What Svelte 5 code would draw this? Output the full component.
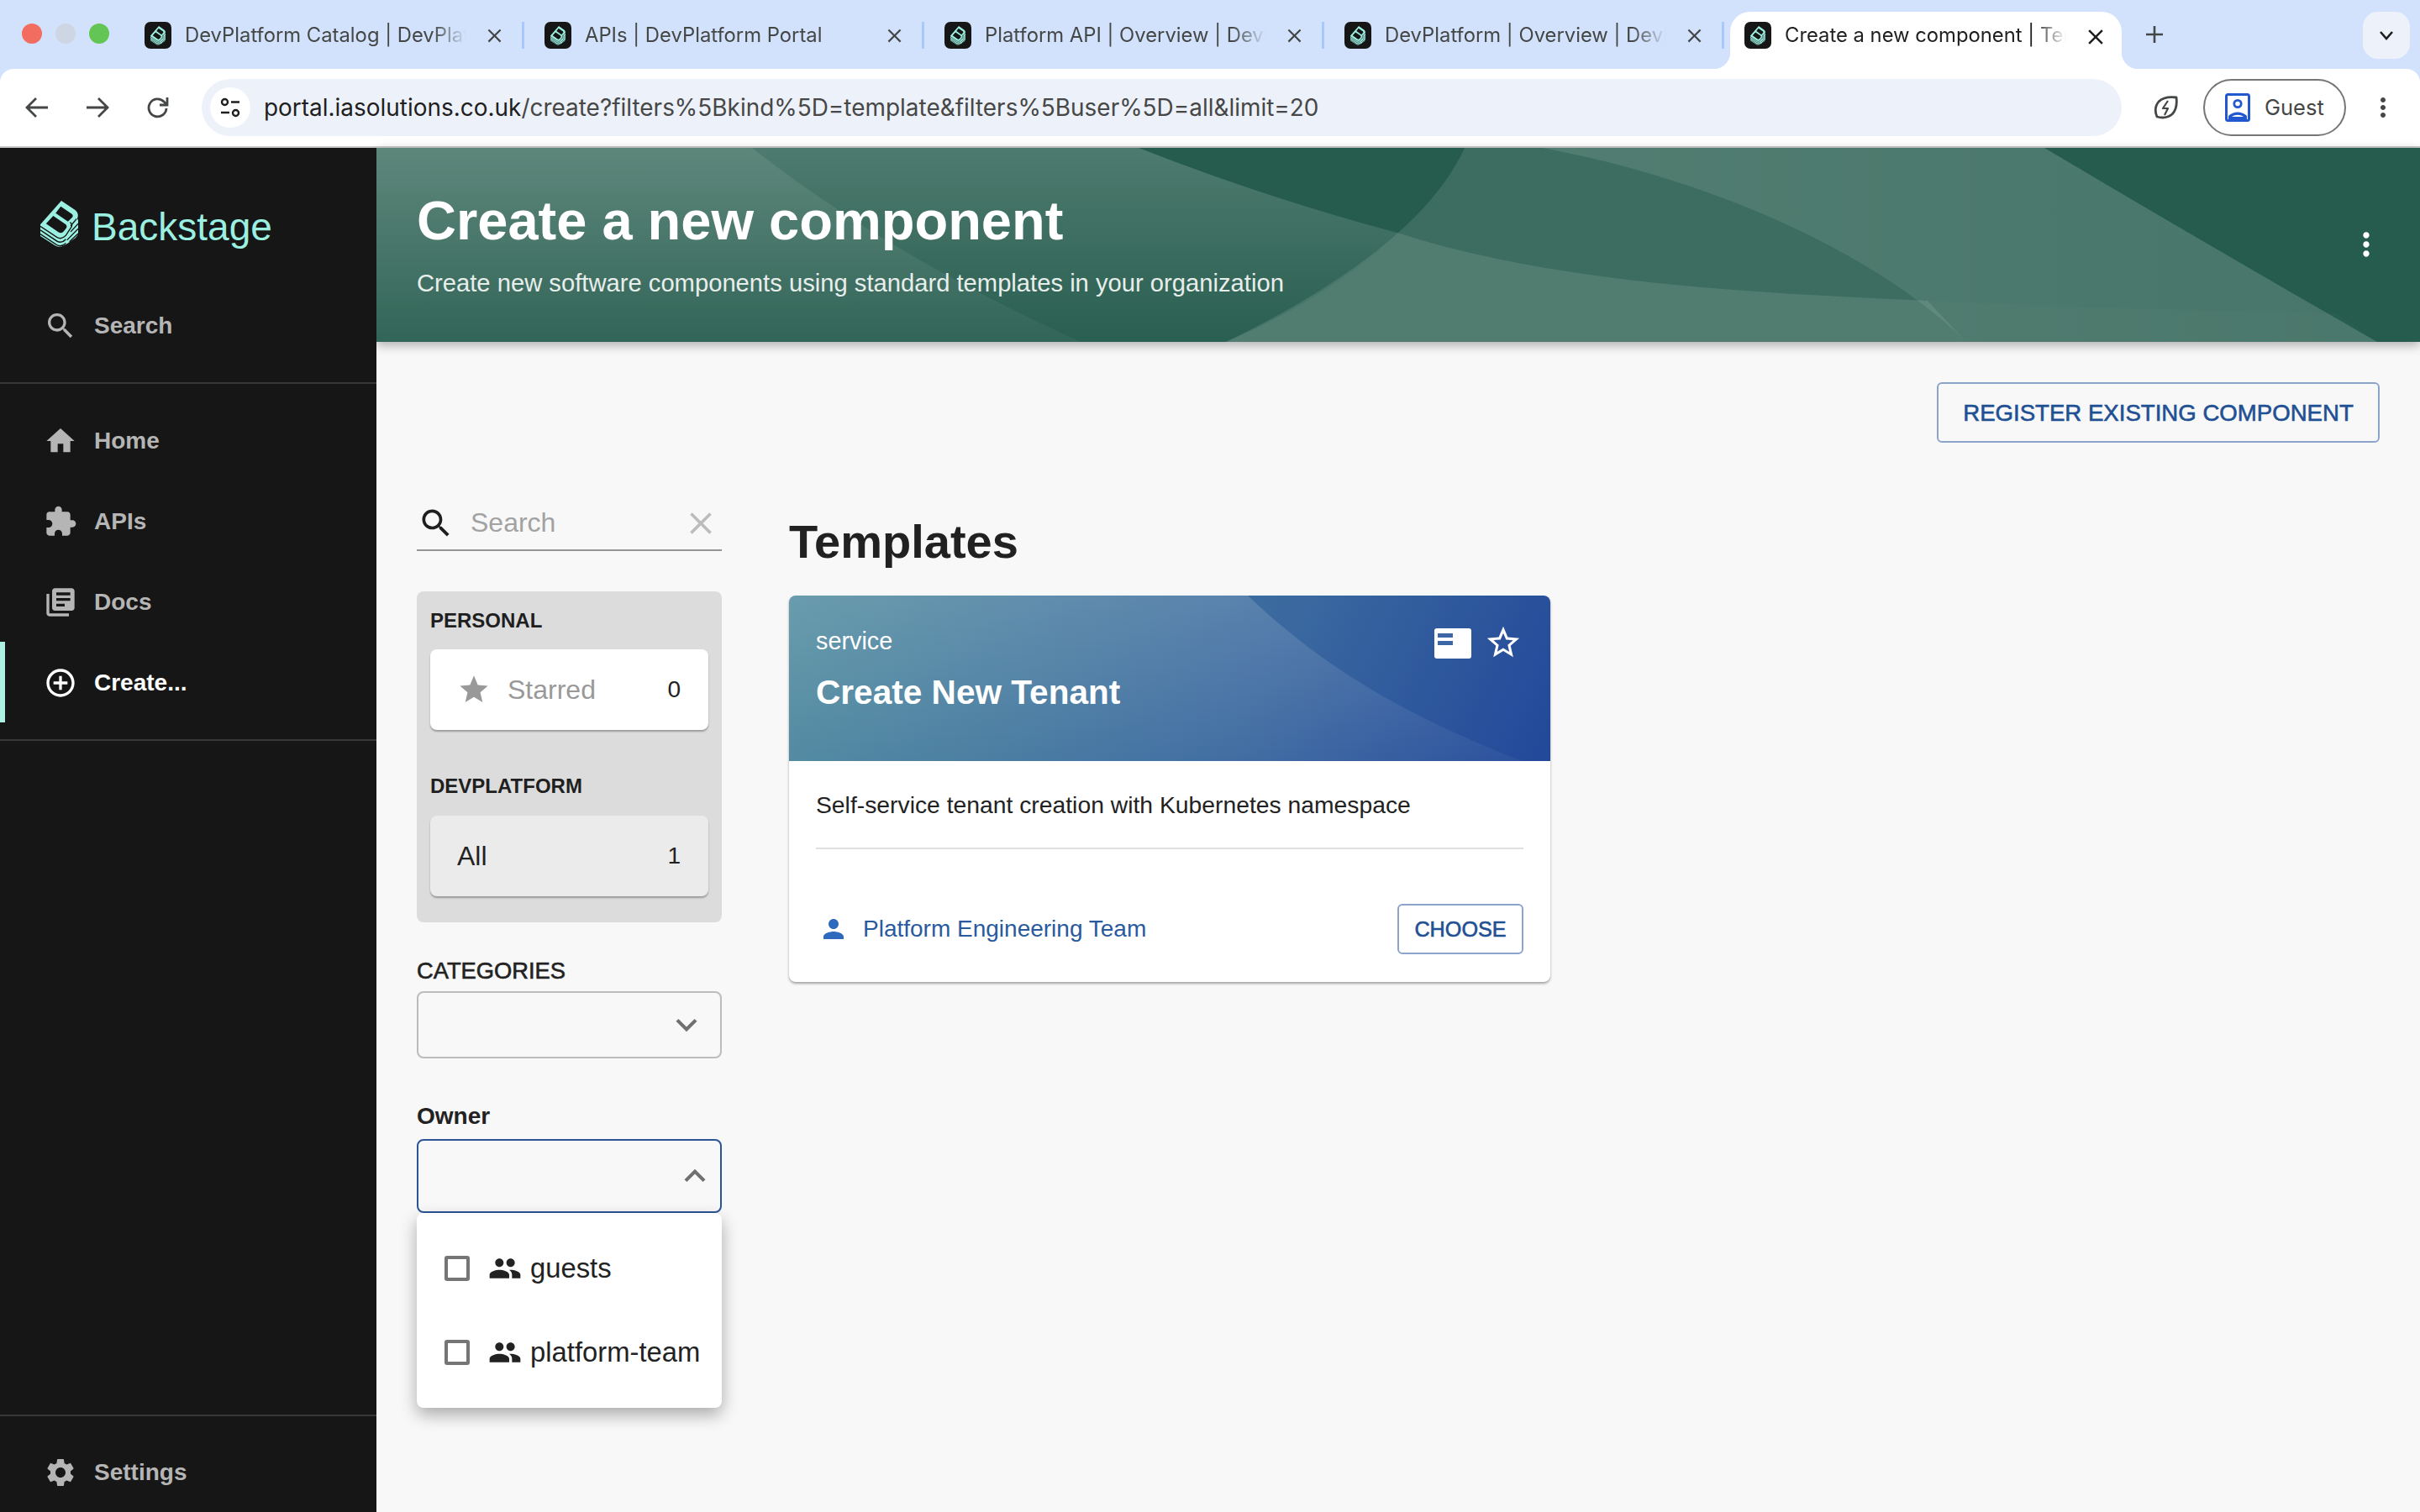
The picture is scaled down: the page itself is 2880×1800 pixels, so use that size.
<script>
  const icons = {
    search: 'M15.5 14h-.79l-.28-.27C15.41 12.59 16 11.11 16 9.5 16 5.91 13.09 3 9.5 3S3 5.91 3 9.5 5.91 16 9.5 16c1.61 0 3.09-.59 4.23-1.57l.27.28v.79l5 4.99L20.49 19l-4.99-5zm-6 0C7.01 14 5 11.99 5 9.5S7.01 5 9.5 5 14 7.01 14 9.5 11.99 14 9.5 14z',
    home: 'M10 20v-6h4v6h5v-8h3L12 3 2 12h3v8z',
    puzzle: 'M20.5 11H19V7c0-1.1-.9-2-2-2h-4V3.5C13 2.12 11.88 1 10.5 1S8 2.12 8 3.5V5H4c-1.1 0-1.99.9-1.99 2v3.8H3.5c1.49 0 2.7 1.21 2.7 2.7s-1.21 2.7-2.7 2.7H2V20c0 1.1.9 2 2 2h3.8v-1.5c0-1.49 1.21-2.7 2.7-2.7 1.49 0 2.7 1.21 2.7 2.7V22H17c1.1 0 2-.9 2-2v-4h1.5c1.38 0 2.5-1.12 2.5-2.5S21.88 11 20.5 11z',
    docs: 'M4 6H2v14c0 1.1.9 2 2 2h14v-2H4V6zm16-4H8c-1.1 0-2 .9-2 2v12c0 1.1.9 2 2 2h12c1.1 0 2-.9 2-2V4c0-1.1-.9-2-2-2zm-1 9H9V9h10v2zm-4 4H9v-2h6v2zm4-8H9V5h10v2z',
    add: 'M13 7h-2v4H7v2h4v4h2v-4h4v-2h-4V7zm-1-5C6.48 2 2 6.48 2 12s4.48 10 10 10 10-4.48 10-10S17.52 2 12 2zm0 18c-4.41 0-8-3.59-8-8s3.59-8 8-8 8 3.59 8 8-3.59 8-8 8z',
    settings: 'M19.14 12.94c.04-.3.06-.61.06-.94 0-.32-.02-.64-.07-.94l2.03-1.58c.18-.14.23-.41.12-.61l-1.92-3.32c-.12-.22-.37-.29-.59-.22l-2.39.96c-.5-.38-1.03-.7-1.62-.94l-.36-2.54c-.04-.24-.24-.41-.48-.41h-3.84c-.24 0-.43.17-.47.41l-.36 2.54c-.59.24-1.13.57-1.62.94l-2.39-.96c-.22-.08-.47 0-.59.22L2.74 8.87c-.12.21-.08.47.12.61l2.03 1.58c-.05.3-.09.63-.09.94s.02.64.07.94l-2.03 1.58c-.18.14-.23.41-.12.61l1.92 3.32c.12.22.37.29.59.22l2.39-.96c.5.38 1.03.7 1.62.94l.36 2.54c.05.24.24.41.48.41h3.84c.24 0 .44-.17.47-.41l.36-2.54c.59-.24 1.13-.56 1.62-.94l2.39.96c.22.08.47 0 .59-.22l1.92-3.32c.12-.22.07-.47-.12-.61l-2.01-1.58zM12 15.6c-1.98 0-3.6-1.62-3.6-3.6s1.62-3.6 3.6-3.6 3.6 1.62 3.6 3.6-1.62 3.6-3.6 3.6z',
    star: 'M12 17.27L18.18 21l-1.64-7.03L22 9.24l-7.19-.61L12 2 9.19 8.63 2 9.24l5.46 4.73L5.82 21z',
    starBorder: 'M22 9.24l-7.19-.62L12 2 9.19 8.63 2 9.24l5.46 4.73L5.82 21 12 17.27 18.18 21l-1.63-7.03L22 9.24zM12 15.4l-3.76 2.27 1-4.28-3.32-2.88 4.38-.38L12 6.1l1.71 4.04 4.38.38-3.32 2.88 1 4.28L12 15.4z',
    close: 'M19 6.41L17.59 5 12 10.59 6.41 5 5 6.41 10.59 12 5 17.59 6.41 19 12 13.41 17.59 19 19 17.59 13.41 12z',
    more: 'M16.59 8.59L12 13.17 7.41 8.59 6 10l6 6 6-6z',
    less: 'M12 8l-6 6 1.41 1.41L12 10.83l4.59 4.58L18 14z',
    person: 'M12 12c2.21 0 4-1.79 4-4s-1.79-4-4-4-4 1.79-4 4 1.79 4 4 4zm0 2c-2.67 0-8 1.34-8 4v2h16v-2c0-2.66-5.33-4-8-4z',
    group: 'M16 11c1.66 0 2.99-1.34 2.99-3S17.66 5 16 5c-1.66 0-3 1.34-3 3s1.34 3 3 3zm-8 0c1.66 0 2.99-1.34 2.99-3S9.66 5 8 5C6.34 5 5 6.34 5 8s1.34 3 3 3zm0 2c-2.33 0-7 1.17-7 3.5V19h14v-2.5c0-2.33-4.67-3.5-7-3.5zm8 0c-.29 0-.62.02-.97.05 1.16.84 1.97 1.97 1.97 3.45V19h6v-2.5c0-2.33-4.67-3.5-7-3.5z',
    dots: 'M12 8c1.1 0 2-.9 2-2s-.9-2-2-2-2 .9-2 2 .9 2 2 2zm0 2c-1.1 0-2 .9-2 2s.9 2 2 2 2-.9 2-2-.9-2-2-2zm0 6c-1.1 0-2 .9-2 2s.9 2 2 2 2-.9 2-2-.9-2-2-2z',
  }

  const tabs = [
    'DevPlatform Catalog | DevPlatform Portal',
    'APIs | DevPlatform Portal',
    'Platform API | Overview | DevPlatform Portal',
    'DevPlatform | Overview | DevPlatform Portal',
  ]

  const navItems = [
    { label: 'Home', icon: 'home' },
    { label: 'APIs', icon: 'puzzle' },
    { label: 'Docs', icon: 'docs' },
    { label: 'Create...', icon: 'add', active: true },
  ]

  const owners = ['guests', 'platform-team']
</script>

{#snippet icon(name, size, cls = '')}
  <svg class="icon {cls}" width={size} height={size} viewBox="0 0 24 24"><path d={icons[name]} /></svg>
{/snippet}

{#snippet logo(width, height)}
  <svg class="logo" {width} {height} viewBox="15 25 126 133" preserveAspectRatio="none">
    <path fill="#9bf0e1" d="M15 92L85 25L132 52Q145 62 138 75L141 80V116Q141 124 132 130L105 146L92 152Q80 158 65 152L15 125Z" />
    <path fill="#161616" d="M83 41L121 63Q126 68 120 73L107 84L66 60Z M58 68L100 92Q106 98 100 104L92 112Q84 118 76 114L34 90Z" />
    <path fill="none" stroke="#161616" stroke-width="3.500" d="M15 97L70 128Q86 136 100 123L118 100Q124 92 114 86 M15 108L70 139Q86 147 100 134 M15 119L70 150Q86 157 100 145 M136 76L116 96 M141 90L116 113 M141 104L104 136 M141 118L112 141" />
  </svg>
{/snippet}

{#snippet favicon()}
  <span class="favicon">{@render logo(18, 23)}</span>
{/snippet}

<div class="app">
  <div class="tabstrip">
    <div class="lights">
      <span class="light red"></span>
      <span class="light grey"></span>
      <span class="light green"></span>
    </div>
    {#each tabs as title}
      <div class="tab">
        {@render favicon()}
        <span class="tab-title">{title}</span>
        {@render icon('close', 27, 'tab-close')}
        <span class="tab-sep"></span>
      </div>
    {/each}
    <div class="tab active">
      {@render favicon()}
      <span class="tab-title">Create a new component | Templates</span>
      {@render icon('close', 30, 'tab-close')}
    </div>
    <svg class="newtab" width="28" height="28" viewBox="0 0 28 28"><path d="M14 4v20M4 14h20" stroke="#444746" stroke-width="2.6" /></svg>
    <div class="tabsearch">
      <svg width="20" height="14" viewBox="0 0 20 14" fill="none"><path d="M3 3l7 8 7-8" stroke="#1f1f1f" stroke-width="2.6" /></svg>
    </div>
  </div>

  <div class="toolbar">
    <svg class="navicon" width="32" height="32" viewBox="0 0 32 32" fill="none" stroke="#444746" stroke-width="2.8"><path d="M29 16H5M15 5L4 16l11 11" /></svg>
    <svg class="navicon" width="32" height="32" viewBox="0 0 32 32" fill="none" stroke="#444746" stroke-width="2.8"><path d="M3 16h24M17 5l11 11-11 11" /></svg>
    <svg class="navicon" width="32" height="32" viewBox="0 0 32 32" fill="none" stroke="#444746" stroke-width="2.8"><path d="M26 17a10.500 10.500 0 1 1-3-8l3.500 3.500M27 4v9h-9" /></svg>
    <div class="omnibox">
      <span class="tune">
        <svg width="26" height="26" viewBox="0 0 26 26" fill="none" stroke="#1f1f1f" stroke-width="2.4"><circle cx="6.500" cy="6.500" r="3.500" /><path d="M14 6.500h10M2 19h10" /><circle cx="19.500" cy="19.500" r="3.500" /></svg>
      </span>
      <span class="url">portal.iasolutions.co.uk<span class="url-rest">/create?filters%5Bkind%5D=template&amp;filters%5Buser%5D=all&amp;limit=20</span></span>
    </div>
    <svg class="leaf" width="32" height="32" viewBox="0 0 32 32" fill="none" stroke="#444746" stroke-width="2.8" stroke-linejoin="round"><path d="M5 27c-3-7-2-13 2-18 5-5 12-6 21-5 1 8 0 15-5 20-5 4-11 5-18 3z" /><path d="M18 8l-6 9h6l-4 8" stroke-width="2.2" /></svg>
    <div class="profile">
      <svg width="30" height="34" viewBox="0 0 30 34" fill="none"><rect x="1.500" y="1.500" width="27" height="31" rx="2" fill="#fff" stroke="#2158d0" stroke-width="3" /><circle cx="15" cy="12.500" r="4.200" stroke="#2158d0" stroke-width="2.800" /><path d="M4 27c6-6 16-6 22 0v5H4z" fill="#2158d0" /><path d="M8 28c4-3 10-3 14 0z" fill="#fff" /></svg>
      <span>Guest</span>
    </div>
    {@render icon('dots', 36, 'chrome-dots')}
  </div>

  <div class="page">
    <aside class="sidebar">
      <div class="brand">
        {@render logo(45, 56)}
        <span>Backstage</span>
      </div>
      <div class="nav-item">
        {@render icon('search', 40)}
        <span>Search</span>
      </div>
      <div class="nav-rule first"></div>
      {#each navItems as item}
        <div class="nav-item" class:active={item.active}>
          {@render icon(item.icon, 40)}
          <span>{item.label}</span>
        </div>
      {/each}
      <div class="nav-rule second"></div>
      <div class="spacer"></div>
      <div class="nav-rule"></div>
      <div class="nav-item settings">
        {@render icon('settings', 40)}
        <span>Settings</span>
      </div>
    </aside>

    <main class="main">
      <header class="hero">
        <svg class="waves" width="2432" height="231" viewBox="0 0 2432 231" preserveAspectRatio="none">
          <defs>
            <linearGradient id="fade" x1="0" y1="0" x2="0" y2="1">
              <stop offset="0" stop-color="#fff" stop-opacity="0.19" />
              <stop offset="1" stop-color="#fff" stop-opacity="0.02" />
            </linearGradient>
            <linearGradient id="fade2" x1="0" y1="0" x2="0" y2="1">
              <stop offset="0" stop-color="#fff" stop-opacity="0.09" />
              <stop offset="1" stop-color="#fff" stop-opacity="0.04" />
            </linearGradient>
            <linearGradient id="fade3" gradientUnits="userSpaceOnUse" x1="1400" y1="0" x2="2400" y2="0">
              <stop offset="0" stop-color="#fff" stop-opacity="0.11" />
              <stop offset="1" stop-color="#fff" stop-opacity="0.06" />
            </linearGradient>
          </defs>
          <path d="M0 0L907 0Q1060 60 1218 102Q1130 180 1011 231L0 231Z" fill="url(#fade)" />
          <path d="M0 0L447 0Q605 125 838 231L0 231Z" fill="url(#fade2)" />
          <path d="M1295 0L1985 0Q2170 110 2381 231L1011 231Q1240 120 1295 0Z" fill="#fff" fill-opacity="0.11" />
          <path d="M1388 0C1600 40 1790 130 1892 231L2381 231Q2170 110 1985 0Z" fill="url(#fade3)" />
          <path d="M1218 102C1400 160 1620 172 1846 182L1892 231L1011 231Q1130 180 1218 102Z" fill="#fff" fill-opacity="0.11" />
          <path d="M1846 182C2000 190 2200 194 2332 197L2381 231L1892 231Z" fill="#fff" fill-opacity="0.02" />
        </svg>
        <div class="hero-text">
          <h1>Create a new component</h1>
          <p>Create new software components using standard templates in your organization</p>
        </div>
        {@render icon('dots', 44, 'hero-dots')}
      </header>

      <div class="content">
        <div class="actions">
          <button class="outlined register" type="button">REGISTER EXISTING COMPONENT</button>
        </div>
        <div class="columns">
          <div class="filters">
            <div class="searchbox">
              {@render icon('search', 44, 'sb-search')}
              <span class="sb-text">Search</span>
              {@render icon('close', 44, 'sb-close')}
            </div>
            <div class="picker">
              <div class="picker-label">PERSONAL</div>
              <div class="picker-card">
                {@render icon('star', 40, 'picker-star')}
                <span class="picker-name muted">Starred</span>
                <span class="picker-count">0</span>
              </div>
              <div class="picker-label second">DEVPLATFORM</div>
              <div class="picker-card selected">
                <span class="picker-name">All</span>
                <span class="picker-count">1</span>
              </div>
            </div>
            <div class="field-label categories">CATEGORIES</div>
            <div class="select">
              {@render icon('more', 50, 'chev')}
            </div>
            <div class="field-label owner">Owner</div>
            <div class="select open">
              {@render icon('less', 50, 'chev')}
            </div>
            <div class="menu">
              {#each owners as owner}
                <div class="menu-row">
                  <span class="check"></span>
                  {@render icon('group', 40, 'group')}
                  <span>{owner}</span>
                </div>
              {/each}
            </div>
          </div>

          <section class="templates">
            <h2>Templates</h2>
            <article class="card">
              <div class="card-head">
                <svg class="card-wave" width="906" height="197" viewBox="0 0 906 197" preserveAspectRatio="none">
                  <defs>
                    <linearGradient id="cardfade" x1="0" y1="0" x2="0" y2="1">
                      <stop offset="0" stop-color="#fff" stop-opacity="0.15" />
                      <stop offset="1" stop-color="#fff" stop-opacity="0.04" />
                    </linearGradient>
                  </defs>
                  <path d="M0 0L546 0C640 90 740 145 872 197L0 197Z" fill="url(#cardfade)" />
                </svg>
                <div class="card-head-text">
                  <div class="card-type">service</div>
                  <div class="card-title">Create New Tenant</div>
                </div>
                <svg class="book" width="44" height="36" viewBox="0 0 44 36"><rect width="44" height="36" rx="3" fill="#fff" /><rect x="4" y="6" width="18" height="5" fill="#3d66a6" /><rect x="4" y="15" width="18" height="5" fill="#3d66a6" /></svg>
                {@render icon('starBorder', 46, 'card-star')}
              </div>
              <div class="card-body">
                <p class="card-desc">Self-service tenant creation with Kubernetes namespace</p>
                <div class="card-rule"></div>
                <div class="card-foot">
                  {@render icon('person', 36, 'owner-icon')}
                  <span class="owner-link">Platform Engineering Team</span>
                  <button class="outlined choose" type="button">CHOOSE</button>
                </div>
              </div>
            </article>
          </section>
        </div>
      </div>
    </main>
  </div>
</div>

<style>
  :global(body) {
    margin: 0;
    overflow: hidden;
    font-family: 'Liberation Sans', Arial, sans-serif;
  }

  .app {
    width: 2880px;
    height: 1800px;
    display: flex;
    flex-direction: column;
    overflow: hidden;
    background: #d3e2fc;
  }

  .icon {
    flex: none;
    display: block;
    fill: currentColor;
  }

  .logo {
    flex: none;
    display: block;
  }

  /* browser chrome */
  .tabstrip {
    height: 82px;
    flex: none;
    display: flex;
    align-items: flex-start;
    font-family: Inter, 'Liberation Sans', sans-serif;
  }

  .lights {
    width: 148px;
    flex: none;
    display: flex;
    gap: 16px;
    padding: 28px 0 0 26px;
    box-sizing: border-box;
  }

  .light {
    width: 24px;
    height: 24px;
    border-radius: 50%;
  }

  .red {
    background: #f26d60;
  }

  .grey {
    background: #ced5e3;
  }

  .green {
    background: #62c554;
  }

  .tab {
    width: 476px;
    height: 68px;
    margin-top: 14px;
    padding: 12px 0 0 24px;
    box-sizing: border-box;
    flex: none;
    display: flex;
    align-items: flex-start;
    position: relative;
    color: #444746;
  }

  .tab.active {
    width: 466px;
    margin-left: 7px;
    padding-left: 17px;
    background: #fff;
    border-radius: 24px 24px 0 0;
    color: #1f1f1f;
  }

  .tab.active::before,
  .tab.active::after {
    content: '';
    position: absolute;
    bottom: 0;
    width: 20px;
    height: 20px;
  }

  .tab.active::before {
    left: -20px;
    background: radial-gradient(circle at 0 0, transparent 20px, #fff 20.500px);
  }

  .tab.active::after {
    right: -20px;
    background: radial-gradient(circle at 100% 0, transparent 20px, #fff 20.500px);
  }

  .favicon {
    width: 32px;
    height: 32px;
    flex: none;
    border-radius: 7px;
    background: #161616;
    display: flex;
    align-items: center;
    justify-content: center;
  }

  .tab-title {
    width: 335px;
    margin-left: 16px;
    flex: none;
    font-size: 23.800px;
    line-height: 32px;
    white-space: nowrap;
    overflow: hidden;
    -webkit-mask-image: linear-gradient(to right, #000 88%, transparent);
    mask-image: linear-gradient(to right, #000 88%, transparent);
  }

  :global(.tab-close) {
    margin: 3px 0 0 20px;
  }

  .tab-sep {
    position: absolute;
    right: 0;
    top: 12px;
    width: 3px;
    height: 32px;
    background: #a8c7fa;
  }

  .newtab {
    flex: none;
    margin: 27px 0 0 25px;
  }

  .tabsearch {
    width: 56px;
    height: 56px;
    margin: 14px 0 0 234px;
    flex: none;
    border-radius: 18px;
    background: #edf2fa;
    display: flex;
    align-items: center;
    justify-content: center;
  }

  .toolbar {
    height: 94px;
    flex: none;
    box-sizing: border-box;
    background: #fff;
    border-radius: 16px 16px 0 0;
    border-bottom: 2px solid #c9ccc9;
    display: flex;
    align-items: center;
    padding-left: 28px;
    padding-bottom: 1px;
    font-family: Inter, 'Liberation Sans', sans-serif;
  }

  .navicon {
    flex: none;
    margin-right: 40px;
  }

  .navicon:nth-child(3) {
    margin-right: 0;
  }

  .omnibox {
    width: 2285px;
    height: 68px;
    margin-left: 36px;
    flex: none;
    border-radius: 34px;
    background: #edf2fa;
    display: flex;
    align-items: center;
    padding-left: 10px;
    box-sizing: border-box;
  }

  .tune {
    width: 48px;
    height: 48px;
    flex: none;
    border-radius: 50%;
    background: #fff;
    display: flex;
    align-items: center;
    justify-content: center;
  }

  .url {
    margin-left: 16px;
    font-size: 27.950px;
    color: #1f1f1f;
    white-space: nowrap;
  }

  .url-rest {
    color: #474747;
  }

  .leaf {
    flex: none;
    margin-left: 37px;
  }

  .profile {
    width: 170px;
    height: 68px;
    margin-left: 28px;
    flex: none;
    box-sizing: border-box;
    border: 2px solid #747775;
    border-radius: 34px;
    display: flex;
    align-items: center;
    gap: 17px;
    padding-left: 24px;
    font-size: 25.500px;
    color: #444746;
  }

  :global(.chrome-dots) {
    margin-left: 26px;
    color: #444746;
  }

  /* app shell */
  .page {
    flex: 1;
    min-height: 0;
    display: flex;
    background: #f8f8f8;
  }

  .sidebar {
    width: 448px;
    flex: none;
    display: flex;
    flex-direction: column;
    background: #161616;
    color: #b5b5b5;
    position: relative;
    z-index: 2;
  }

  .brand {
    height: 163px;
    flex: none;
    box-sizing: border-box;
    padding: 63px 0 0 48px;
    display: flex;
    align-items: flex-start;
    gap: 16px;
    color: #9bf0e1;
    font-size: 46px;
    line-height: 62px;
  }

  .nav-item {
    height: 96px;
    flex: none;
    box-sizing: border-box;
    padding-left: 52px;
    padding-top: 1px;
    display: flex;
    align-items: center;
    gap: 20px;
    font-size: 28px;
    font-weight: 700;
  }

  .nav-item.active {
    color: #fff;
    border-left: 6px solid #aef0e2;
    padding-left: 46px;
  }

  .nav-rule {
    height: 2px;
    flex: none;
    background: #383838;
  }

  .nav-rule.first {
    margin: 20px 0 19px;
  }

  .nav-rule.second {
    margin-top: 20px;
  }

  .spacer {
    flex: 1;
  }

  .nav-item.settings {
    margin-top: 18px;
  }

  .main {
    flex: 1;
    min-width: 0;
    display: flex;
    flex-direction: column;
  }

  .hero {
    height: 231px;
    flex: none;
    position: relative;
    display: flex;
    justify-content: space-between;
    align-items: flex-start;
    background: #255c4d;
    box-shadow: 0 4px 12px rgba(0, 0, 0, 0.3);
    color: #fff;
  }

  .waves {
    position: absolute;
    inset: 0;
  }

  .hero-text {
    position: relative;
    padding: 51px 0 0 48px;
  }

  h1 {
    margin: 0;
    font-size: 65px;
    line-height: 72px;
    font-weight: 700;
  }

  .hero p {
    margin: 20px 0 0;
    font-size: 29.200px;
    line-height: 36px;
    color: #e8eeeb;
  }

  :global(.hero-dots) {
    position: absolute;
    right: 42px;
    top: 93px;
  }

  .content {
    flex: 1;
    min-height: 0;
    padding: 48px 48px 0;
  }

  .actions {
    display: flex;
    justify-content: flex-end;
  }

  .outlined {
    background: transparent;
    border: 2px solid #8ca4cc;
    border-radius: 6px;
    color: #1f5093;
    font-family: 'Liberation Sans', Arial, sans-serif;
    padding: 0;
    -webkit-text-stroke: 0.6px currentColor;
  }

  .register {
    width: 527px;
    height: 72px;
    padding-top: 2px;
    font-size: 27.600px;
  }

  .columns {
    display: flex;
    gap: 80px;
    margin-top: 64px;
  }

  .filters {
    width: 363px;
    flex: none;
    position: relative;
  }

  .searchbox {
    height: 65px;
    box-sizing: border-box;
    border-bottom: 2px solid #949494;
    display: flex;
    align-items: center;
    padding-top: 1px;
    padding-bottom: 1px;
    color: #1f1f1f;
    font-size: 32px;
  }

  :global(.sb-search) {
    margin-left: 1px;
  }

  .sb-text {
    margin-left: 19px;
    color: #a2a2a2;
    flex: 1;
  }

  :global(.sb-close) {
    margin-right: 3px;
    color: #bcbcbc;
  }

  .picker {
    margin-top: 48px;
    height: 394px;
    box-sizing: border-box;
    padding: 18px 16px 0;
    background: #dcdcdc;
    border-radius: 8px;
  }

  .picker-label {
    height: 34px;
    line-height: 34px;
    padding-left: 0;
    font-size: 24px;
    font-weight: 700;
    color: #1f1f1f;
  }

  .picker-label.second {
    margin-top: 50px;
  }

  .picker-card {
    height: 96px;
    margin-top: 17px;
    box-sizing: border-box;
    padding: 0 32px;
    display: flex;
    align-items: center;
    background: #fff;
    border-radius: 8px;
    box-shadow: 0 2px 2px rgba(0, 0, 0, 0.3);
    font-size: 32px;
    color: #222;
  }

  .picker-card.selected {
    margin-top: 18px;
    background: #ebebeb;
  }

  :global(.picker-star) {
    margin: 0 20px 0 0;
    color: #999;
  }

  .picker-name {
    flex: 1;
  }

  .picker-name.muted {
    color: #999;
  }

  .picker-count {
    font-size: 28px;
    color: #222;
    margin-right: 1px;
  }

  .field-label {
    font-size: 27.300px;
    line-height: 34px;
    color: #222;
    -webkit-text-stroke: 0.6px currentColor;
  }

  .field-label.categories {
    margin-top: 41px;
  }

  .field-label.owner {
    margin-top: 52px;
    font-size: 28px;
    font-weight: 700;
    -webkit-text-stroke: 0;
  }

  .select {
    height: 80px;
    margin-top: 7px;
    box-sizing: border-box;
    border: 2px solid #bcbcbc;
    border-radius: 8px;
    display: flex;
    align-items: center;
    justify-content: flex-end;
    padding-right: 15px;
    color: #707070;
  }

  .select.open {
    height: 88px;
    margin-top: 10px;
    border-color: #2c5597;
    padding-right: 5px;
  }

  .menu {
    position: absolute;
    left: 0;
    right: 0;
    top: 853px;
    height: 232px;
    box-sizing: border-box;
    padding: 16px 0;
    background: #fff;
    border-radius: 8px;
    box-shadow: 0 8px 20px rgba(0, 0, 0, 0.32);
  }

  .menu-row {
    height: 100px;
    display: flex;
    align-items: center;
    padding-left: 33px;
    font-size: 32.800px;
    color: #222;
  }

  .check {
    width: 30px;
    height: 30px;
    flex: none;
    box-sizing: border-box;
    border: 4px solid #757575;
    border-radius: 3px;
  }

  :global(.group) {
    margin: 0 10px 0 22px;
    color: #222;
  }

  .templates h2 {
    margin: 0;
    height: 118px;
    padding-top: 22px;
    box-sizing: border-box;
    font-size: 56px;
    line-height: 64px;
    font-weight: 700;
    color: #212121;
  }

  .card {
    width: 906px;
    height: 460px;
    display: flex;
    flex-direction: column;
    background: #fff;
    border-radius: 8px;
    overflow: hidden;
    box-shadow: 0 2px 3px rgba(0, 0, 0, 0.35);
  }

  .card-head {
    height: 197px;
    flex: none;
    position: relative;
    display: flex;
    align-items: flex-start;
    background: linear-gradient(115deg, #4f8b9e 0%, #3a689f 62%, #22489a 100%);
    color: #fff;
  }

  .card-wave {
    position: absolute;
    inset: 0;
  }

  .card-head-text {
    position: relative;
    flex: 1;
    padding: 37px 0 0 32px;
  }

  .card-type {
    font-size: 28.800px;
    line-height: 34px;
  }

  .card-title {
    margin-top: 21px;
    font-size: 40.600px;
    line-height: 46px;
    font-weight: 700;
  }

  .book {
    position: relative;
    margin: 39px 0 0;
    flex: none;
  }

  :global(.card-star) {
    position: relative;
    margin: 33px 33px 0 15px;
    color: #fff;
  }

  .card-body {
    flex: 1;
    padding: 0 32px;
  }

  .card-desc {
    margin: 35px 0 0;
    font-size: 28.300px;
    line-height: 34px;
    color: #222;
  }

  .card-rule {
    height: 2px;
    margin-top: 34px;
    background: #e0e0e0;
  }

  .card-foot {
    margin-top: 65px;
    display: flex;
    align-items: center;
  }

  :global(.owner-icon) {
    margin-left: 3px;
    color: #2d6abd;
  }

  .owner-link {
    flex: 1;
    margin-left: 17px;
    font-size: 28px;
    color: #2a5a9e;
  }

  .choose {
    width: 150px;
    height: 60px;
    font-size: 25.200px;
  }
</style>
